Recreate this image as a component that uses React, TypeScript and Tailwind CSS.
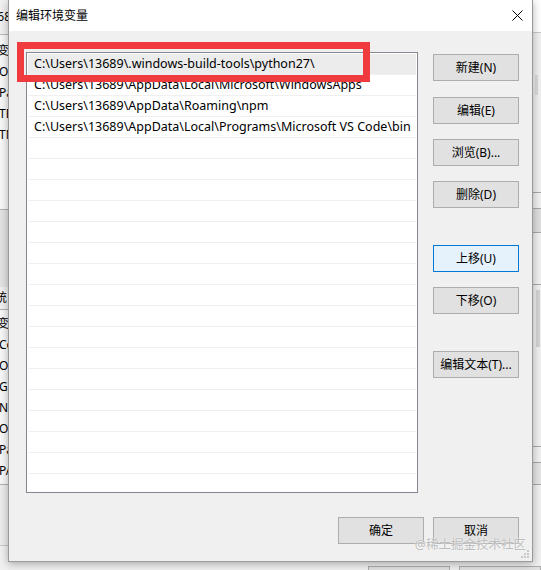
const paths = [
  "C:\\Users\\13689\\.windows-build-tools\\python27\\",
  "C:\\Users\\13689\\AppData\\Local\\Microsoft\\WindowsApps",
  "C:\\Users\\13689\\AppData\\Roaming\\npm",
  "C:\\Users\\13689\\AppData\\Local\\Programs\\Microsoft VS Code\\bin",
];

const sideButtons = [
  { label: "新建(N)", gap: "mt-[2px]" },
  { label: "编辑(E)", gap: "mt-[16px]" },
  { label: "浏览(B)...", gap: "mt-[15px]" },
  { label: "删除(D)", gap: "mt-[15px]" },
  { label: "上移(U)", gap: "mt-[37px]", focused: true },
  { label: "下移(O)", gap: "mt-[15px]" },
  { label: "编辑文本(T)...", gap: "mt-[37px]" },
];

const userRows = ["Or", "Pa", "TE", "TN"];
const sysRows = ["Co", "Or", "GI", "NU", "OS", "Pa", "PA"];

const font = "font-['Noto_Sans','Noto_Sans_CJK_SC',sans-serif]";

const WinButton = ({ label, focused }: { label: string; focused?: boolean }) => (
  <button
    className={`w-[86px] h-[27px] border text-[12px] text-black flex items-center justify-center ${
      focused ? "bg-[#e5f1fb] border-[#0078d7]" : "bg-[#e1e1e1] border-[#adadad]"
    }`}
  >
    {label}
  </button>
);

const Backdrop = () => (
  <div className="flex flex-col w-full h-full">
    <div className="flex h-[562px]">
      <div className="w-[8px] overflow-hidden flex flex-col text-[12px] text-black">
        <div className="h-[35px] bg-[#f0f0f0] border-b border-[#b9b9b9] flex items-center justify-end whitespace-nowrap">
          <span className="-mr-[3px]">68</span>
        </div>
        <div className="h-[175px] bg-[#f7f7f7] border-b border-[#b0b0b0] flex flex-col whitespace-nowrap pt-[5px]">
          <span className="h-[21px] leading-[21px] -ml-[3px]">变</span>
          {userRows.map((r, i) => (
            <span key={i} className="h-[21px] leading-[21px] -ml-[1px]">{r}</span>
          ))}
        </div>
        <div className="h-[100px] bg-[#e2e2e2] border-b border-[#b0b0b0] flex flex-col justify-end whitespace-nowrap">
          <span className="h-[22px] leading-[22px] -ml-[5px] bg-[#f0f0f0]">统</span>
        </div>
        <div className="h-[175px] bg-[#f7f7f7] border-b border-[#b0b0b0] flex flex-col whitespace-nowrap pt-[3px]">
          <span className="h-[21px] leading-[21px] -ml-[3px]">变</span>
          {sysRows.map((r, i) => (
            <span key={i} className="h-[21px] leading-[21px] -ml-[1px]">{r}</span>
          ))}
        </div>
        <div className="h-[61px] bg-[#ececec] border-b border-[#c8c8c8]" />
        <div className="flex-1 bg-[#f0f0f0]" />
      </div>
      <div className="flex-1 bg-[#f0f0f0]" />
      <div className="w-[8px] flex flex-col">
        <div className="h-[33px] bg-white border-b border-[#c8c8c8]" />
        <div className="h-[160px] bg-[#f0f0f0] border-b border-[#a8a8a8] flex flex-col">
          <div className="mt-[42px] ml-[2px] w-[3px] h-[20px] bg-[#dadada]" />
        </div>
        <div className="h-[16px] bg-[#f0f0f0] border-b border-[#a8a8a8]" />
        <div className="h-[24px] bg-[#dedede] border-b border-[#a8a8a8]" />
        <div className="h-[52px] bg-[#f0f0f0] border-b border-[#a8a8a8]" />
        <div className="h-[162px] bg-[#f0f0f0] border-b border-[#a8a8a8] flex">
          <div className="mt-[5px] ml-[3px] w-[4px] h-[57px] bg-[#d4d4d4]" />
        </div>
        <div className="h-[16px] bg-[#f0f0f0] border-b border-[#a8a8a8]" />
        <div className="h-[22px] bg-[#e4e4e4] border-b border-[#a8a8a8]" />
        <div className="flex-1 bg-[#f0f0f0]" />
      </div>
    </div>
    <div className="h-[8px] flex bg-[#f0f0f0] pl-[368px] pt-[4px] gap-[9px]">
      <div className="w-[86px] h-full bg-[#e1e1e1] border-t border-x border-[#adadad]" />
      <div className="w-[86px] h-full bg-[#e1e1e1] border-t border-x border-[#adadad]" />
    </div>
  </div>
);

const Grip = () => (
  <svg width="8" height="8" viewBox="0 0 8 8" className="absolute right-[3px] bottom-[3px]">
    <rect x="6" y="0" width="2" height="2" fill="#c8c8c8" />
    <rect x="3" y="3" width="2" height="2" fill="#c8c8c8" />
    <rect x="6" y="3" width="2" height="2" fill="#c8c8c8" />
    <rect x="0" y="6" width="2" height="2" fill="#c8c8c8" />
    <rect x="3" y="6" width="2" height="2" fill="#c8c8c8" />
    <rect x="6" y="6" width="2" height="2" fill="#c8c8c8" />
  </svg>
);

const App = () => {
  const rows = Array.from({ length: 22 }, (_, i) => paths[i] ?? "");

  return (
    <div className={`relative w-[541px] h-[570px] overflow-hidden bg-[#f0f0f0] ${font}`}>
      <Backdrop />

      {/* the dialog window lies over the window behind it */}
      <div className="absolute left-[8px] top-0 w-[525px] h-[562px] bg-[#f0f0f0] border-x border-b border-[#9a9a9a] shadow-[0_2px_8px_rgba(0,0,0,0.3)] flex flex-col">
        <div className="h-[31px] bg-white flex items-center justify-between pl-[7px] pr-[9px]">
          <span className="text-[12px] text-black">编辑环境变量</span>
          <svg width="11" height="11" viewBox="0 0 11 11">
            <path d="M0.5 0.5 L10.5 10.5 M10.5 0.5 L0.5 10.5" stroke="#000" strokeWidth="1" />
          </svg>
        </div>

        <div className="flex pl-[17px] pt-[21px]">
          <div className="w-[392px] h-[441px] bg-white border border-[#828790] pt-[1px] px-[1px] overflow-hidden flex flex-col">
            {rows.map((p, i) => (
              <div
                key={i}
                className={`h-[21px] shrink-0 border-b border-[#f0f0f0] pl-[6px] text-[12.5px] leading-[20px] text-black whitespace-nowrap ${
                  i === 0 ? "bg-[#ececec]" : ""
                }`}
              >
                {p}
              </div>
            ))}
          </div>

          <div className="flex flex-col ml-[15px]">
            {sideButtons.map((b) => (
              <div key={b.label} className={b.gap}>
                <WinButton label={b.label} focused={b.focused} />
              </div>
            ))}
          </div>
        </div>

        <div className="flex justify-end gap-[9px] pr-[13px] mt-[24px]">
          <WinButton label="确定" />
          <WinButton label="取消" />
        </div>

        <span className="absolute right-[6px] bottom-[6px] text-[12.5px] text-[#bdbdbd] [text-shadow:0_0_2px_#fff]">
          @稀土掘金技术社区
        </span>
        <Grip />
      </div>

      {/* red annotation around the first entry */}
      <div className="absolute left-[17px] top-[42px] w-[353px] h-[40px] border-[7px] border-[#ef3b3d]" />
    </div>
  );
};

export default App;
